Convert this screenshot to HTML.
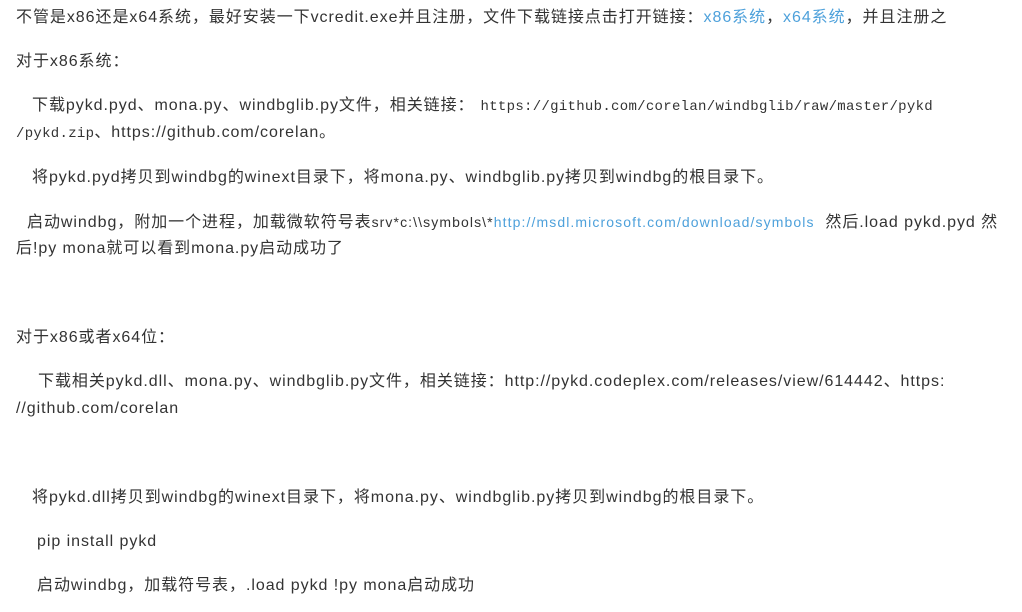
<!DOCTYPE html>
<html><head><meta charset="utf-8"><style>
html,body{margin:0;padding:0;background:#fff;width:1022px;height:612px;overflow:hidden}
body{font-family:"Liberation Sans","Noto Sans CJK SC",sans-serif;font-size:16px;color:#333;letter-spacing:.95px}
.l{position:absolute;height:22px;line-height:22px;white-space:nowrap}
a{color:#4ea1db;text-decoration:none}
.m{font-family:"Liberation Mono","Noto Sans CJK SC",monospace;font-size:14px;letter-spacing:.3px}
.s{font-size:14px;letter-spacing:1.1px}
</style></head><body>
<div class="l" style="left:16px;top:7px">不管是x86还是x64系统，最好安装一下vcredit.exe并且注册，文件下载链接点击打开链接：<a>x86系统</a>，<a>x64系统</a>，并且注册之</div>
<div class="l" style="left:16px;top:51px">对于x86系统：</div>
<div class="l" style="left:32px;top:95px">下载pykd.pyd、mona.py、windbglib.py文件，相关链接：<span class="m" style="margin-left:6px">https://github.com/corelan/windbglib/raw/master/pykd</span></div>
<div class="l" style="left:16px;top:122px"><span class="m">/pykd.zip</span>、https://github.com/corelan。</div>
<div class="l" style="left:32px;top:167px">将pykd.pyd拷贝到windbg的winext目录下，将mona.py、windbglib.py拷贝到windbg的根目录下。</div>
<div class="l" style="left:27px;top:211px">启动windbg，附加一个进程，加载微软符号表<span class="s">srv*c:\\symbols\*</span><a class="s">http://msdl.microsoft.com/download/symbols</a>&nbsp; 然后.load pykd.pyd 然</div>
<div class="l" style="left:16px;top:238px">后!py mona就可以看到mona.py启动成功了</div>
<div class="l" style="left:16px;top:327px">对于x86或者x64位：</div>
<div class="l" style="left:38px;top:371px">下载相关pykd.dll、mona.py、windbglib.py文件，相关链接：http://pykd.codeplex.com/releases/view/614442、https:</div>
<div class="l" style="left:16px;top:398px">//github.com/corelan</div>
<div class="l" style="left:32px;top:487px">将pykd.dll拷贝到windbg的winext目录下，将mona.py、windbglib.py拷贝到windbg的根目录下。</div>
<div class="l" style="left:37px;top:531px">pip install pykd</div>
<div class="l" style="left:37px;top:575px">启动windbg，加载符号表，.load pykd !py mona启动成功</div>
</body></html>
